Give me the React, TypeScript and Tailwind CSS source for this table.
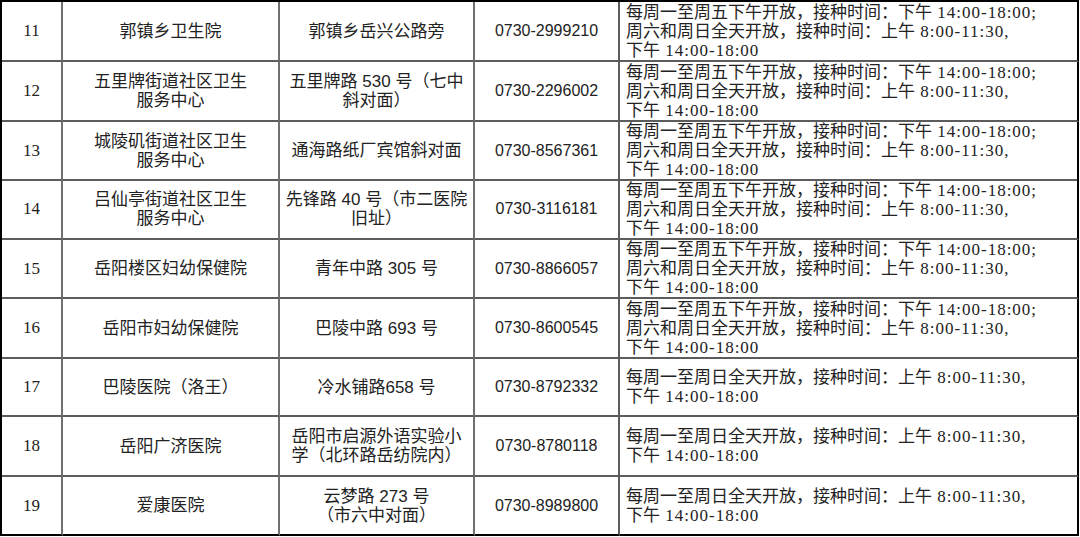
const SERIF = { fontFamily: '"Liberation Serif", "Noto Sans CJK SC", serif' };
const SANS = { fontFamily: '"Liberation Sans", "Noto Sans CJK SC", sans-serif' };

const WEEKDAY = [
  "每周一至周五下午开放，接种时间：下午 14:00-18:00;",
  "周六和周日全天开放，接种时间：上午 8:00-11:30,",
  "下午 14:00-18:00",
];
const ALLWEEK = ["每周一至周日全天开放，接种时间：上午 8:00-11:30,", "下午 14:00-18:00"];

type Row = { no: number; name: string[]; addr: string[]; tel: string; hours: string[]; h: string };

const rows: Row[] = [
  { no: 11, name: ["郭镇乡卫生院"], addr: ["郭镇乡岳兴公路旁"], tel: "0730-2999210", hours: WEEKDAY, h: "h-[60px]" },
  { no: 12, name: ["五里牌街道社区卫生", "服务中心"], addr: ["五里牌路 530 号（七中", "斜对面）"], tel: "0730-2296002", hours: WEEKDAY, h: "h-[60px]" },
  { no: 13, name: ["城陵矶街道社区卫生", "服务中心"], addr: ["通海路纸厂宾馆斜对面"], tel: "0730-8567361", hours: WEEKDAY, h: "h-[58px]" },
  { no: 14, name: ["吕仙亭街道社区卫生", "服务中心"], addr: ["先锋路 40 号（市二医院", "旧址）"], tel: "0730-3116181", hours: WEEKDAY, h: "h-[60px]" },
  { no: 15, name: ["岳阳楼区妇幼保健院"], addr: ["青年中路 305 号"], tel: "0730-8866057", hours: WEEKDAY, h: "h-[59px]" },
  { no: 16, name: ["岳阳市妇幼保健院"], addr: ["巴陵中路 693 号"], tel: "0730-8600545", hours: WEEKDAY, h: "h-[60px]" },
  { no: 17, name: ["巴陵医院（洛王）"], addr: ["冷水铺路658 号"], tel: "0730-8792332", hours: ALLWEEK, h: "h-[58px]" },
  { no: 18, name: ["岳阳广济医院"], addr: ["岳阳市启源外语实验小", "学（北环路岳纺院内）"], tel: "0730-8780118", hours: ALLWEEK, h: "h-[60px]" },
  { no: 19, name: ["爱康医院"], addr: ["云梦路 273 号", "（市六中对面）"], tel: "0730-8989800", hours: ALLWEEK, h: "h-[59px]" },
];

// latin runs get a bit of tracking so they sit at half-width like the source font
const HoursLine = ({ text }: { text: string }) => (
  <span className="whitespace-pre">
    {text.split(/([\x20-\x7e]+)/).map((p, i) =>
      i % 2 ? <span key={i} className="tracking-[1px]">{p}</span> : <span key={i}>{p}</span>
    )}
  </span>
);

export default function App() {
  return (
    <div className="w-[1080px] h-[537px] bg-white text-[#222] overflow-hidden" style={SERIF}>
      <div className="w-[1079px] border-t-2 border-l-2 border-black">
        {rows.map((r, i) => {
          const last = i === rows.length - 1;
          const bb = last ? "border-b-2 border-b-black" : "border-b-2 border-b-[#5c5c5c]";
          return (
            <div key={r.no} className={`grid grid-cols-[61px_217px_195px_145px_459px] ${r.h}`}>
              <div className={`flex items-center justify-center border-r-2 border-r-[#707070] ${bb} text-[17px]`}>{r.no}</div>
              <div className={`flex flex-col items-center justify-center border-r-2 border-r-[#707070] ${bb} text-[17px] leading-[19px]`}>
                {r.name.map((t) => <span key={t}>{t}</span>)}
              </div>
              <div className={`flex flex-col items-center justify-center border-r-2 border-r-[#707070] ${bb} text-[17px] leading-[19px]`} style={SANS}>
                {r.addr.map((t) => <span key={t} className="whitespace-pre">{t}</span>)}
              </div>
              <div className={`flex items-center justify-center border-r-2 border-r-[#5c5c5c] ${bb} text-[16px]`} style={SANS}>
                {r.tel}
              </div>
              <div className={`flex flex-col justify-center pl-[6px] border-r-2 border-r-black ${bb} text-[17px] leading-[19px]`}>
                {r.hours.map((t) => <HoursLine key={t} text={t} />)}
              </div>
            </div>
          );
        })}
      </div>
    </div>
  );
}
